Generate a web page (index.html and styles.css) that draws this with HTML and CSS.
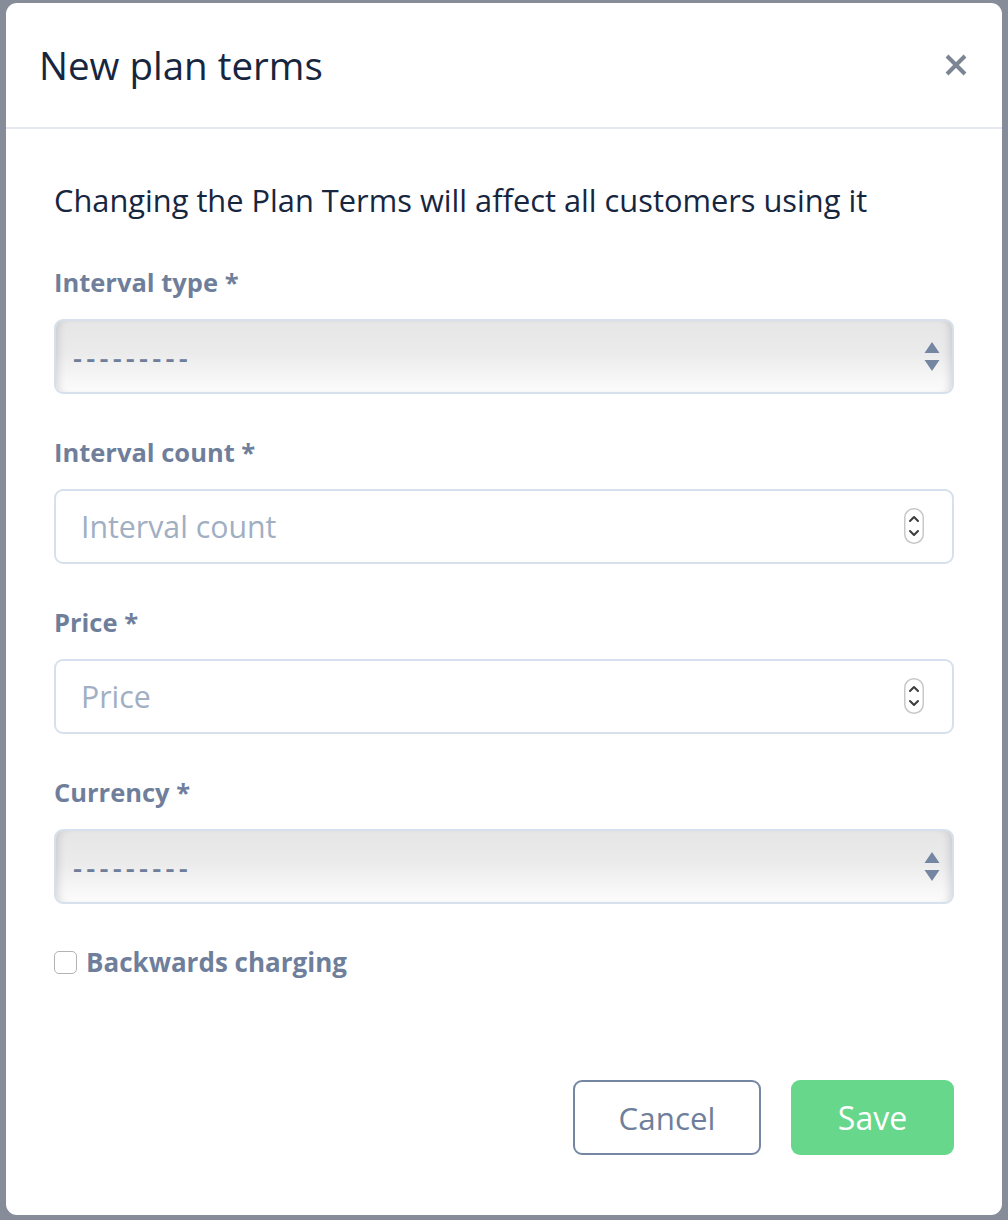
FILE: index.html
```html
<!DOCTYPE html>
<html lang="en">
<head>
<meta charset="utf-8">
<title>New plan terms</title>
<link rel="stylesheet" href="styles.css">
</head>
<body>
<div class="backdrop">
  <div class="modal">
    <header class="modal-header">
      <h1 class="modal-title">New plan terms</h1>
      <button class="close" aria-label="Close">
        <svg width="24" height="24" viewBox="0 0 24 24"><path d="M3 3 L21 21 M21 3 L3 21" stroke="#7c8593" stroke-width="4" stroke-linecap="butt"/></svg>
      </button>
    </header>
    <div class="modal-body">
      <p class="intro">Changing the Plan Terms will affect all customers using it</p>

      <div class="field">
        <label class="label">Interval type *</label>
        <div class="select-wrap">
          <select class="select"><option>---------</option></select>
          <svg class="select-arrows" width="16" height="30" viewBox="0 0 16 30"><path d="M8 0 L15.5 11 H0.5 Z M0.5 18 H15.5 L8 29 Z" fill="#7486a2"/></svg>
        </div>
      </div>

      <div class="field">
        <label class="label">Interval count *</label>
        <div class="input-wrap">
          <input class="input" type="text" placeholder="Interval count">
          <svg class="spinner" width="20" height="36" viewBox="0 0 20 36"><rect x="0.75" y="0.75" width="18.5" height="34.5" rx="9" fill="#fff" stroke="#c8c8c8" stroke-width="1.5"/><path d="M6 13 L10 9 L14 13 M6 23 L10 27 L14 23" fill="none" stroke="#3c3c3c" stroke-width="2" stroke-linecap="round" stroke-linejoin="round"/></svg>
        </div>
      </div>

      <div class="field">
        <label class="label">Price *</label>
        <div class="input-wrap">
          <input class="input" type="text" placeholder="Price">
          <svg class="spinner" width="20" height="36" viewBox="0 0 20 36"><rect x="0.75" y="0.75" width="18.5" height="34.5" rx="9" fill="#fff" stroke="#c8c8c8" stroke-width="1.5"/><path d="M6 13 L10 9 L14 13 M6 23 L10 27 L14 23" fill="none" stroke="#3c3c3c" stroke-width="2" stroke-linecap="round" stroke-linejoin="round"/></svg>
        </div>
      </div>

      <div class="field">
        <label class="label">Currency *</label>
        <div class="select-wrap">
          <select class="select"><option>---------</option></select>
          <svg class="select-arrows" width="16" height="30" viewBox="0 0 16 30"><path d="M8 0 L15.5 11 H0.5 Z M0.5 18 H15.5 L8 29 Z" fill="#7486a2"/></svg>
        </div>
      </div>

      <label class="check-row">
        <span class="checkbox"></span>
        <span class="check-label">Backwards charging</span>
      </label>
    </div>
    <footer class="modal-footer">
      <button class="btn btn-cancel">Cancel</button>
      <button class="btn btn-save">Save</button>
    </footer>
  </div>
</div>
</body>
</html>
```

FILE: styles.css
```css
* { box-sizing: border-box; }

html, body {
  margin: 0;
  padding: 0;
}

body {
  width: 1008px;
  height: 1220px;
  background: #878d98;
  font-family: "Open Sans", "Lato", sans-serif;
  overflow: hidden;
}

.backdrop {
  padding: 3px 6px 5px 6px;
  height: 1220px;
}

.modal {
  background: #ffffff;
  border-radius: 11px;
  height: 1212px;
  display: flex;
  flex-direction: column;
}

.modal-header {
  height: 126px;
  border-bottom: 2px solid #e3e8f1;
  display: flex;
  align-items: center;
  justify-content: space-between;
  padding: 0 34px 0 33px;
}

.modal-title {
  margin: 0;
  font-size: 38.5px;
  font-weight: 400;
  color: #17263f;
}

.close {
  border: 0;
  background: none;
  padding: 0;
  width: 24px;
  height: 24px;
  display: flex;
}

.modal-body {
  padding: 53px 48px 0 48px;
}

.intro {
  margin: 0 0 46px 0;
  font-size: 30.8px;
  line-height: 36px;
  color: #17263f;
}

.field {
  margin-bottom: 40px;
}

.label {
  display: block;
  font-size: 25.5px;
  line-height: 36px;
  font-weight: 700;
  color: #6f7f9b;
  margin-bottom: 19px;
}

.select-wrap,
.input-wrap {
  position: relative;
  height: 75px;
}

.select {
  -webkit-appearance: none;
  appearance: none;
  width: 100%;
  height: 75px;
  border: 2px solid #d7e0ed;
  border-radius: 9px;
  background: linear-gradient(to bottom, #e6e6e6 0%, #ebebeb 45%, #f3f3f3 70%, #fcfcfc 100%);
  box-shadow: inset 8px 0 8px -6px rgba(0,0,0,0.14), inset -8px 0 8px -6px rgba(0,0,0,0.14);
  font-family: "Open Sans", "Lato", sans-serif;
  font-size: 28px;
  font-weight: 600;
  color: #6f7f9b;
  padding: 0 0 0 17px;
  letter-spacing: 4.2px;
}

.select-arrows {
  position: absolute;
  right: 14px;
  top: 23px;
}

.input {
  width: 100%;
  height: 75px;
  border: 2px solid #d7e0ed;
  border-radius: 9px;
  background: #fff;
  font-family: "Open Sans", "Lato", sans-serif;
  font-size: 30.3px;
  padding: 0 0 0 25px;
  color: #17263f;
  outline: none;
}

.input::placeholder {
  color: #a1afc3;
}

.spinner {
  position: absolute;
  right: 30px;
  top: 19px;
}

.check-row {
  display: flex;
  align-items: center;
  height: 36px;
  gap: 9px;
}

.checkbox {
  width: 23px;
  height: 23px;
  border: 1.5px solid #b3b3b3;
  border-radius: 5px;
  background: #fff;
}

.check-label {
  font-size: 26px;
  font-weight: 700;
  color: #6f7f9b;
}

.modal-footer {
  margin-top: auto;
  display: flex;
  justify-content: flex-end;
  gap: 30px;
  padding: 0 48px 60px 0;
}

.btn {
  height: 75px;
  border-radius: 9px;
  font-family: "Open Sans", "Lato", sans-serif;
  cursor: pointer;
}

.btn-cancel {
  width: 188px;
  background: #fff;
  border: 2px solid #7486a2;
  color: #6f7f9b;
  font-size: 31.3px;
}

.btn-save {
  width: 163px;
  background: #66d78b;
  border: 0;
  color: #ffffff;
  font-size: 32px;
}
```
